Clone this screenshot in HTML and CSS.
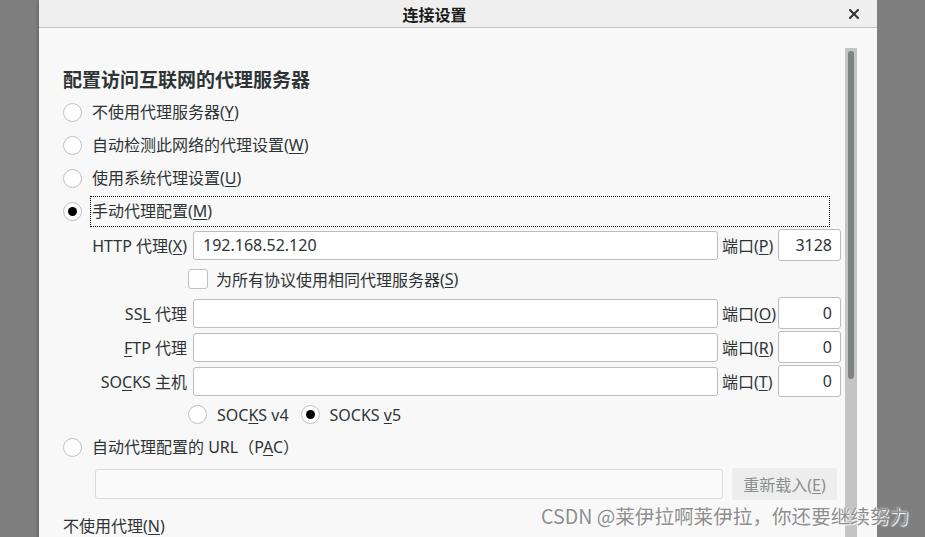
FILE: index.html
```html
<!DOCTYPE html>
<html lang="zh-CN">

<head>
    <meta charset="UTF-8">
    <meta name="viewport" content="width=device-width, initial-scale=1.0">
    <title>连接设置</title>
    <link rel="stylesheet" href="styles.css">
</head>

<body>
    <div class="dialog">
        <div class="titlebar">
            <span class="title">连接设置</span>
            <span class="close">
                <svg width="10" height="10" viewBox="0 0 10 10">
                    <path d="M1 1 L9 9 M9 1 L1 9" stroke="#2e3436" stroke-width="2" stroke-linecap="square" />
                </svg>
            </span>
        </div>

        <div class="dialog-body">
            <div class="content">
                <h1 class="heading">配置访问互联网的代理服务器</h1>

                <div class="option"><span class="radio"></span><span class="option-label">不使用代理服务器(<u>Y</u>)</span></div>
                <div class="option"><span class="radio"></span><span class="option-label">自动检测此网络的代理设置(<u>W</u>)</span></div>
                <div class="option"><span class="radio"></span><span class="option-label">使用系统代理设置(<u>U</u>)</span></div>
                <div class="option"><span class="radio checked"></span><span class="option-label focused">手动代理配置(<u>M</u>)</span></div>

                <div class="manual">
                    <span class="field-label">HTTP 代理(<u>X</u>)</span>
                    <input class="entry" type="text" value="192.168.52.120">
                    <span class="port-label">端口(<u>P</u>)</span>
                    <input class="entry port" type="text" value="3128">

                    <div class="check-row"><span class="checkbox"></span>为所有协议使用相同代理服务器(<u>S</u>)</div>

                    <span class="field-label">SS<u>L</u> 代理</span>
                    <input class="entry" type="text">
                    <span class="port-label">端口(<u>O</u>)</span>
                    <input class="entry port" type="text" value="0">

                    <span class="field-label"><u>F</u>TP 代理</span>
                    <input class="entry" type="text">
                    <span class="port-label">端口(<u>R</u>)</span>
                    <input class="entry port" type="text" value="0">

                    <span class="field-label">SO<u>C</u>KS 主机</span>
                    <input class="entry" type="text">
                    <span class="port-label">端口(<u>T</u>)</span>
                    <input class="entry port" type="text" value="0">

                    <div class="socks-row">
                        <span class="radio"></span><span class="socks-label">SOC<u>K</u>S v4</span>
                        <span class="radio checked"></span><span class="socks-label">SOCKS <u>v</u>5</span>
                    </div>
                </div>

                <div class="option"><span class="radio"></span><span class="option-label">自动代理配置的 URL（P<u>A</u>C）</span></div>

                <div class="pac-row">
                    <input class="entry pac" type="text" disabled>
                    <button class="reload" disabled>重新载入(<u>E</u>)</button>
                </div>

                <div class="no-proxy">不使用代理(<u>N</u>)</div>
            </div>

            <div class="scrollbar">
                <div class="thumb"></div>
            </div>
        </div>
    </div>

    <div class="watermark">CSDN @莱伊拉啊莱伊拉，你还要继续努力</div>
</body>

</html>
```

FILE: styles.css
```css
body {
    margin: 0;
    height: 537px;
    overflow: hidden;
    background-color: #7f7f7f;
    font-family: "Noto Sans", "Noto Sans CJK SC", sans-serif;
    font-size: 16px;
    color: #2e3436;
}

.dialog {
    margin-left: 39px;
    width: 838px;
    height: 600px;
    background: #f8f8f8;
    box-shadow: -2px 0 3px rgba(0, 0, 0, 0.15);
}

.titlebar {
    display: flex;
    align-items: center;
    height: 27px;
    background: #efefef;
    border-bottom: 1px solid #c2c2c2;
}

.title {
    flex: 1;
    text-align: center;
    font-family: "Noto Sans CJK SC", sans-serif;
    font-weight: bold;
    font-size: 16px;
    color: #1c1c1c;
}

.close {
    width: 47px;
    display: flex;
    justify-content: center;
}

.dialog-body {
    display: flex;
    padding: 20px 20px 0 24px;
}

.content {
    flex: 1;
    padding-top: 18px;
    margin-right: 4px;
}

.heading {
    margin: 0 0 4px;
    font-family: "Noto Sans CJK SC", sans-serif;
    font-size: 19px;
    line-height: 26px;
    font-weight: bold;
    color: #2e3436;
}

u {
    text-decoration-thickness: 1px;
    text-underline-offset: 2px;
}

.option {
    display: flex;
    align-items: center;
    height: 33px;
}

.radio {
    box-sizing: border-box;
    width: 19px;
    height: 19px;
    flex-shrink: 0;
    border: 1px solid #c0c0c0;
    border-radius: 50%;
    background: #fff;
    margin-right: 8px;
    display: flex;
    align-items: center;
    justify-content: center;
}

.radio.checked::after {
    content: "";
    width: 9px;
    height: 9px;
    border-radius: 50%;
    background: #000;
}

.option-label {
    padding-left: 2px;
    line-height: 20px;
    padding-bottom: 2px;
}

.option-label.focused {
    flex: 1;
    height: 31px;
    box-sizing: border-box;
    display: flex;
    align-items: center;
    padding-left: 1px;
    margin-right: 11px;
    border: 1px dotted #000;
}

.manual {
    display: grid;
    grid-template-columns: 99px 1fr 52px 63px;
    grid-auto-rows: 32px;
    column-gap: 4px;
    row-gap: 2px;
    align-items: center;
    margin: 1px 0 0 27px;
}

.field-label {
    text-align: right;
    padding-right: 2px;
    white-space: nowrap;
}

.port-label {
    white-space: nowrap;
}

.entry {
    box-sizing: border-box;
    height: 29px;
    width: 100%;
    padding: 0 9px;
    border: 1px solid #bdbdbd;
    border-radius: 3px;
    background: #fff;
    font: inherit;
    color: #2e3436;
    outline: none;
}

.entry.port {
    height: 32px;
    text-align: right;
    padding-right: 8px;
}

.check-row {
    grid-column: 2 / -1;
    display: flex;
    align-items: center;
    margin-left: -5px;
}

.checkbox {
    box-sizing: border-box;
    width: 20px;
    height: 20px;
    border: 1px solid #c0c0c0;
    border-radius: 3px;
    background: #fff;
    margin-right: 8px;
}

.socks-row {
    grid-column: 2 / -1;
    display: flex;
    align-items: center;
    margin-left: -5px;
    padding-bottom: 1px;
}

.socks-row .radio {
    margin-right: 10px;
}

.socks-label {
    margin-right: 12px;
}

.pac-row {
    display: flex;
    align-items: center;
    gap: 9px;
    height: 32px;
    margin: 4px 4px 0 32px;
}

.entry.pac {
    flex: 1;
    height: 30px;
    background: #fafafa;
    border-color: #dadada;
}

.reload {
    width: 105px;
    height: 32px;
    border: none;
    border-radius: 3px;
    background: #ededed;
    color: #8b8e8f;
    font: inherit;
}

.no-proxy {
    margin-top: 13px;
    line-height: 26px;
}

.scrollbar {
    width: 12px;
    height: 520px;
    background: #c4c4c4;
    display: flex;
    justify-content: center;
    padding-top: 3px;
    box-sizing: border-box;
}

.thumb {
    width: 6px;
    height: 328px;
    border-radius: 3px;
    background: #7e8282;
}

.watermark {
    position: absolute;
    left: 541px;
    top: 504px;
    font-family: "Noto Sans CJK SC", sans-serif;
    font-size: 19.6px;
    line-height: 24px;
    color: #8e8e8e;
    text-shadow: 0 0 2px #fff, 1px 1px 1px #fff;
    white-space: nowrap;
}
```
